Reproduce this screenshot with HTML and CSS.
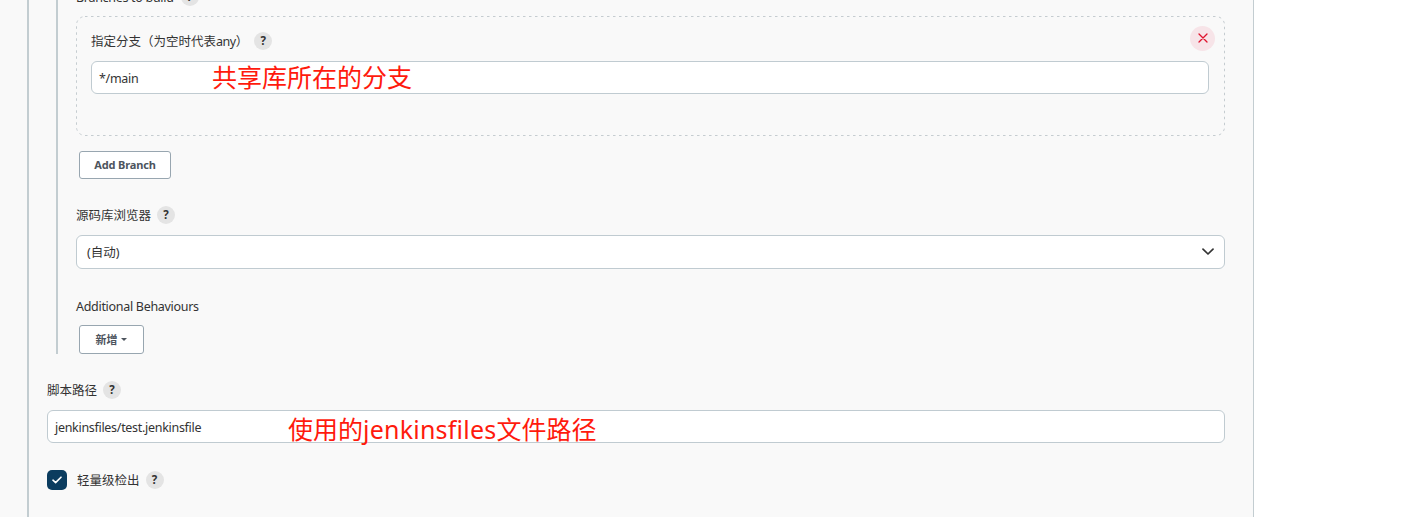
FILE: index.html
```html
<!DOCTYPE html>
<html lang="zh-CN">
<head>
<meta charset="utf-8">
<title>Pipeline</title>
<link rel="stylesheet" href="styles.css">
</head>
<body>
<main class="panel">
  <form class="form">
    <section class="scm">
      <div class="label label-top"><span class="latin">Branches to build</span><span class="help">?</span></div>
      <div class="chunk">
        <svg class="outline" width="1149" height="120"><rect x=".5" y=".5" width="1148" height="119" rx="8.5"/></svg>
        <div class="label label-chunk"><span class="cjk">指定分支（为空时代表<span class="any">any</span>）</span><span class="help">?</span></div>
        <div class="field"><span class="latin">*/main</span><span class="note note-branch">共享库所在的分支</span></div>
        <button type="button" class="remove" aria-label="remove"><svg width="10" height="10" viewBox="0 0 10 10"><path d="M1 1 9 9M9 1 1 9"/></svg></button>
      </div>
      <button type="button" class="btn btn-add"><span>Add Branch</span></button>
      <div class="label label-browser"><span class="cjk">源码库浏览器</span><span class="help">?</span></div>
      <div class="field select"><span class="cjk">(自动)</span><svg width="12" height="8" viewBox="0 0 12 8"><path d="M1 1.2 6 6 11 1.2"/></svg></div>
      <div class="label label-extra"><span class="latin">Additional Behaviours</span></div>
      <button type="button" class="btn btn-new"><span>新增</span><i class="caret"></i></button>
    </section>
    <div class="label label-path"><span class="cjk">脚本路径</span><span class="help">?</span></div>
    <div class="field field-path"><span class="latin">jenkinsfiles/test.jenkinsfile</span><span class="note note-path">使用的<span class="note-latin">jenkinsfiles</span>文件路径</span></div>
    <div class="label label-check"><span class="check"><svg width="10" height="8" viewBox="0 0 10 8"><path d="M1 4.2 3.6 6.6 9 1.2"/></svg></span><span class="cjk">轻量级检出</span><span class="help">?</span></div>
  </form>
</main>
</body>
</html>
```
FILE: styles.css
```css
* { box-sizing: border-box; }
body {
  margin: 0;
  height: 517px;
  overflow: hidden;
  background: #fff;
  color: #333;
  font: 12.5px/20px "Noto Sans", "Noto Sans CJK SC", sans-serif;
}
.panel {
  width: 1254px;
  height: 517px;
  overflow: hidden;
  padding-left: 27px;
  background: #f9f9f9;
  border-right: 1px solid #c3cdd1;
}
.form {
  height: 517px;
  padding: 0 28px 0 18px;
  border-left: 2px solid #c3cdd1;
}
.scm {
  height: 354px;
  margin-left: 9px;
  padding-left: 18px;
  border-left: 2px solid #c3cdd1;
}
.label { display: flex; align-items: center; height: 20px; white-space: nowrap; }
.label-top { margin: -13px 0 9px; }
.cjk, .latin { padding-top: 2px; }
.latin { letter-spacing: -0.3px; }
.any { letter-spacing: -0.5px; }
.help {
  display: flex;
  align-items: center;
  justify-content: center;
  width: 18px;
  height: 18px;
  margin-left: 6px;
  border-radius: 50%;
  background: #e4e4e4;
  font-size: 11.5px;
  line-height: 18px;
  font-weight: 700;
}
.label-top .help { margin-left: 7px; }
.scm { padding-top: 0.02px; display: flow-root; }
.chunk {
  position: relative;
  height: 120px;
  padding: 15px 16px 0 15px;
}
.outline { position: absolute; left: 0; top: 0; }
.outline rect { stroke: #c5ccd0; stroke-width: 1; stroke-dasharray: 2.5 3.5; stroke-linecap: butt; }
.label-chunk { margin-bottom: 10px; }
.label-chunk .help { margin-left: 6px; }
.field {
  position: relative;
  display: flex;
  align-items: center;
  height: 33px;
  padding-left: 7px;
  border: 1px solid #c0cbd1;
  border-radius: 6px;
  background: #fff;
  white-space: nowrap;
}
.note {
  position: absolute;
  color: #ff1a0d;
  font-size: 25px;
  line-height: 32px;
}
.note-branch { left: 120px; top: -1px; }
.note-path { left: 240px; top: 2px; }
.note-latin { letter-spacing: 0.22px; }
.remove {
  position: absolute;
  top: 10px;
  right: 10px;
  display: flex;
  align-items: center;
  justify-content: center;
  width: 25px;
  height: 25px;
  padding: 0 0 1px;
  border: 0;
  border-radius: 50%;
  background: #f7e4e8;
}
svg { fill: none; stroke-linecap: round; stroke-linejoin: round; }
.remove svg { stroke: #e0122d; stroke-width: 1.3; }
.btn {
  display: flex;
  align-items: center;
  justify-content: center;
  margin: 0 0 0 3px;
  padding: 0;
  border: 1px solid #98a6b0;
  border-radius: 3px;
  background: #fff;
  color: #4d545d;
  font: 700 11px/18px "Noto Sans", "Noto Sans CJK SC", sans-serif;
}
.btn-add { width: 92px; height: 28px; margin-top: 15px; letter-spacing: -0.15px; }
.label-browser { margin: 26px 0 10px; }
.select { height: 34px; justify-content: space-between; padding: 0 10px; }
.select svg { stroke: #333; stroke-width: 1.7; }
.label-extra { margin: 27px 0 9px; }
.btn-new { width: 65px; height: 29px; }
.caret { margin-left: 3px; margin-right: 1px; border: 3px solid transparent; border-top-color: #4d545d; border-bottom: 0; }
.label-path { margin: 26px 0 10px; }
.label-check { margin-top: 27px; }
.check {
  display: flex;
  align-items: center;
  justify-content: center;
  width: 20px;
  height: 20px;
  margin-right: 10px;
  border-radius: 5px;
  background: #0b3c5f;
}
.check svg { stroke: #fff; stroke-width: 1.6; }
```
